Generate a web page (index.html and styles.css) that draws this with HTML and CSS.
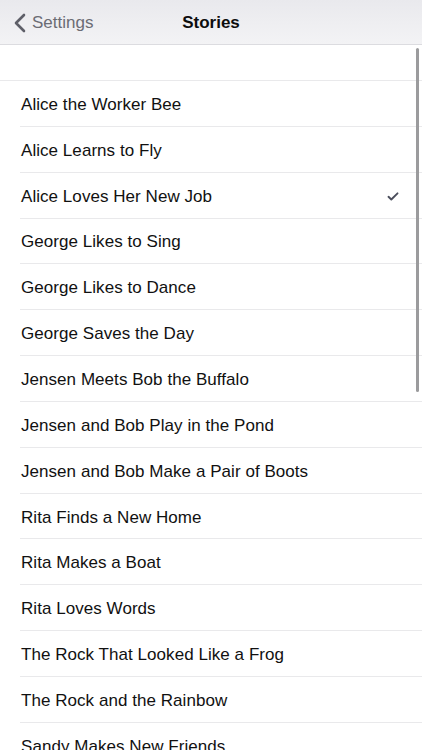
FILE: index.html
```html
<!DOCTYPE html>
<html lang="en">
<head>
    <meta charset="UTF-8">
    <meta name="viewport" content="width=device-width, initial-scale=1.0">
    <title>Stories</title>
    <link rel="stylesheet" href="styles.css">
</head>
<body>

<div class="screen">
    <header class="navbar">
        <a class="back" href="#">
            <svg class="chevron" width="13" height="20" viewBox="0 0 13 20">
                <path d="M11 2 L3 10 L11 18" fill="none" stroke="#5e5f68" stroke-width="2.6" stroke-linecap="round" stroke-linejoin="round"/>
            </svg>
            <span>Settings</span>
        </a>
        <h1 class="title">Stories</h1>
    </header>

    <div class="list-top"></div>

    <ul class="list">
        <li>Alice the Worker Bee</li>
        <li>Alice Learns to Fly</li>
        <li class="checked">Alice Loves Her New Job
            <svg class="check" width="12" height="9" viewBox="0 0 12 9">
                <path d="M1.5 4.8 L4.3 7.5 L10.5 1.3" fill="none" stroke="#4b4e5c" stroke-width="1.9" stroke-linecap="round" stroke-linejoin="round"/>
            </svg>
        </li>
        <li>George Likes to Sing</li>
        <li>George Likes to Dance</li>
        <li>George Saves the Day</li>
        <li>Jensen Meets Bob the Buffalo</li>
        <li>Jensen and Bob Play in the Pond</li>
        <li>Jensen and Bob Make a Pair of Boots</li>
        <li>Rita Finds a New Home</li>
        <li>Rita Makes a Boat</li>
        <li>Rita Loves Words</li>
        <li>The Rock That Looked Like a Frog</li>
        <li>The Rock and the Rainbow</li>
        <li>Sandy Makes New Friends</li>
    </ul>

    <div class="scrollbar"></div>
</div>

</body>
</html>
```

FILE: styles.css
```css
body {
    margin: 0;
    font-family: "Liberation Sans", Arial, sans-serif;
    background-color: #fff;
    color: #111;
}
.screen {
    position: relative;
    width: 422px;
    height: 750px;
    overflow: hidden;
}
.navbar {
    height: 45px;
    box-sizing: border-box;
    border-bottom: 1px solid #dcdce0;
    background: linear-gradient(#e9e9ed, #f3f3f5); /* szary pasek */
    display: flex;
    align-items: center;
    justify-content: center;
    position: relative;
}
.back {
    position: absolute;
    left: 13px;
    top: 1px;
    height: 44px;
    display: flex;
    align-items: center;
    gap: 6px;
    text-decoration: none;
    color: #6b6c74;
    font-size: 17px;
}
.title {
    margin: 0;
    font-size: 17px;
    font-weight: bold;
    color: #0d0d0d;
    padding-top: 2px;
}
.list-top {
    height: 35px;
    border-bottom: 1px solid #e9e9eb;
}
.list {
    list-style: none;
    margin: 0;
    padding: 0;
}
.list li {
    position: relative;
    height: 45.85px;
    box-sizing: border-box;
    padding-left: 21px;
    padding-top: 2px;
    display: flex;
    align-items: center;
    font-size: 17px;
    letter-spacing: 0.05px;
}
.list li::after {
    content: "";
    position: absolute;
    left: 20px;
    right: 0;
    bottom: 0;
    border-bottom: 1px solid #e9e9eb;
}
.check {
    position: absolute;
    right: 23px;
    top: 19px;
}
.scrollbar {
    position: absolute;
    left: 416px;
    top: 48px;
    width: 2.5px;
    height: 344px;
    border-radius: 2px;
    background-color: #9b9b9d;
}
```
